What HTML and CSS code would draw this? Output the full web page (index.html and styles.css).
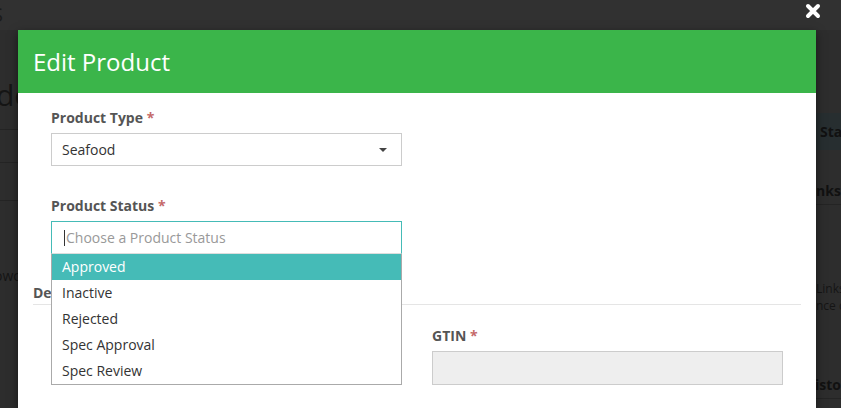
FILE: index.html
```html
<!DOCTYPE html>
<html>
<head>
<meta charset="utf-8">
<link rel="stylesheet" href="styles.css">
</head>
<body>
<div class="page">
  <div class="topbar"><span class="brand">S</span></div>
  <div class="page-main">
    <div class="left-col">
      <div class="page-title">de</div>
      <div class="row-line"></div>
      <div class="row-line r2"></div>
      <div class="row-line r3"></div>
      <div class="low-text">owo</div>
    </div>
    <div class="right-col">
      <div class="sta-box">Sta</div>
      <div class="links-head">nks</div>
      <div class="links-text">Links<br>nce d</div>
      <div class="hist-head">isto</div>
    </div>
  </div>
</div>

<button class="close-btn" aria-label="Close">
  <svg width="16" height="16" viewBox="0 0 16 16"><path d="M3 3 L13 13 M13 3 L3 13" stroke="#fff" stroke-width="4" stroke-linecap="round"/></svg>
</button>

<div class="modal">
  <div class="modal-header">Edit Product</div>
  <div class="modal-body">
    <div class="form-group">
      <label class="label">Product Type <span class="req">*</span></label>
      <div class="select">
        <span>Seafood</span>
        <span class="caret"></span>
      </div>
    </div>
    <div class="form-group status-group">
      <label class="label">Product Status <span class="req">*</span></label>
      <div class="combo">
        <div class="combo-input"><span class="cursor"></span>Choose a Product Status</div>
        <ul class="dropdown">
          <li class="active">Approved</li>
          <li>Inactive</li>
          <li>Rejected</li>
          <li>Spec Approval</li>
          <li>Spec Review</li>
        </ul>
      </div>
    </div>
    <div class="section">
      <h4 class="section-title">Details</h4>
      <div class="grid">
        <div class="form-group">
          <div class="label-spacer"></div>
          <div class="text-input"></div>
        </div>
        <div class="form-group">
          <label class="label">GTIN <span class="req">*</span></label>
          <div class="text-input disabled"></div>
        </div>
      </div>
    </div>
  </div>
</div>
</body>
</html>
```

FILE: styles.css
```css
* { box-sizing: border-box; }
html, body {
  margin: 0;
  padding: 0;
  width: 841px;
  height: 408px;
  overflow: hidden;
  font-family: "Open Sans", "Liberation Sans", sans-serif;
  background: #2d2d2d;
}
.page {
  width: 841px;
  height: 408px;
  display: flex;
  flex-direction: column;
  color: #151515;
}
.topbar {
  height: 30px;
  background: #313131;
  font-size: 20px;
  line-height: 30px;
  color: #1b1b1b;
}
.brand { margin-left: -8px; }
.page-main {
  flex: 1;
  display: flex;
  justify-content: space-between;
}
.left-col {
  width: 18px;
  display: flex;
  flex-direction: column;
}
.page-title {
  margin-top: 50px;
  font-size: 30px;
  line-height: 30px;
  color: #151515;
  margin-left: -4px;
  white-space: nowrap;
}
.row-line { height: 1px; background: #242424; margin-top: 19px; }
.row-line.r2 { margin-top: 32px; }
.row-line.r3 { margin-top: 37px; }
.low-text { margin-top: 65px; font-size: 14px; color: #151515; margin-left: -6px; white-space: nowrap; }
.right-col {
  width: 25px;
  display: flex;
  flex-direction: column;
}
.sta-box {
  margin-top: 83px;
  height: 37px;
  background: #272e30;
  font-weight: 700;
  font-size: 14px;
  line-height: 37px;
  padding-left: 4px;
  color: #111;
  white-space: nowrap;
  overflow: hidden;
}
.links-head {
  margin-top: 32px;
  font-weight: 700;
  font-size: 14px;
  line-height: 18px;
  padding-bottom: 4px;
  border-bottom: 1px solid #242424;
  color: #111;
  white-space: nowrap;
}
.links-text {
  margin-top: 75px;
  font-size: 12px;
  line-height: 17px;
  color: #151515;
  white-space: nowrap;
}
.hist-head {
  margin-top: 62px;
  font-weight: 700;
  font-size: 14px;
  line-height: 18px;
  padding-bottom: 4px;
  border-bottom: 1px solid #242424;
  color: #111;
  margin-left: -1px;
  white-space: nowrap;
}
.close-btn {
  position: absolute;
  left: 805px;
  top: 3px;
  width: 16px;
  height: 16px;
  padding: 0;
  border: 0;
  background: none;
}
.close-btn svg { display: block; }
.modal {
  position: absolute;
  left: 18px;
  top: 30px;
  width: 798px;
  height: 378px;
  overflow: hidden;
  background: #fff;
  box-shadow: 0 3px 9px rgba(0,0,0,0.5);
}
.modal-header {
  height: 63px;
  background: #3bb54a;
  color: #fff;
  font-size: 24px;
  line-height: 63px;
  padding-left: 15px;
}
.modal-body {
  padding: 15px 15px 0 15px;
}
.form-group {
  display: flex;
  flex-direction: column;
  width: 351px;
}
.modal-body > .form-group { margin-left: 18px; }
.status-group { margin-top: 30px; }
.label {
  font-weight: 700;
  font-size: 14px;
  line-height: 20px;
  color: #555;
  margin-bottom: 5px;
}
.label-spacer { height: 25px; }
.req { color: #c56a6a; }
.select {
  height: 33px;
  border: 1px solid #ccc;
  display: flex;
  align-items: center;
  justify-content: space-between;
  padding: 0 14px 0 10px;
  font-size: 14px;
  color: #333;
}
.caret {
  width: 0;
  height: 0;
  border-left: 4px solid transparent;
  border-right: 4px solid transparent;
  border-top: 4px solid #444;
}
.combo { position: relative; height: 33px; }
.combo-input {
  height: 33px;
  border: 1px solid #45bbb7;
  border-bottom-color: #ddd;
  display: flex;
  align-items: center;
  padding-left: 12px;
  font-size: 14px;
  color: #999;
}
.cursor {
  width: 1px;
  height: 16px;
  background: #333;
  margin-right: 1px;
}
.dropdown {
  position: absolute;
  left: 0;
  top: 33px;
  width: 351px;
  margin: 0;
  padding: 0;
  list-style: none;
  background: #fff;
  border: 1px solid #aaa;
  border-top: 0;
  z-index: 2;
}
.dropdown li {
  height: 26px;
  line-height: 26px;
  padding-left: 10px;
  font-size: 14px;
  color: #333;
}
.dropdown li.active { background: #45bbb7; color: #fff; }
.section { margin-top: 29px; }
.section-title {
  margin: 0;
  font-size: 14px;
  font-weight: 700;
  line-height: 20px;
  color: #555;
  padding-bottom: 1px;
  border-bottom: 1px solid #e5e5e5;
}
.grid {
  display: grid;
  grid-template-columns: 351px 351px;
  column-gap: 30px;
  padding: 21px 18px 0 18px;
}
.text-input {
  height: 34px;
  border: 1px solid #ccc;
}
.text-input.disabled { background: #eee; }
```
